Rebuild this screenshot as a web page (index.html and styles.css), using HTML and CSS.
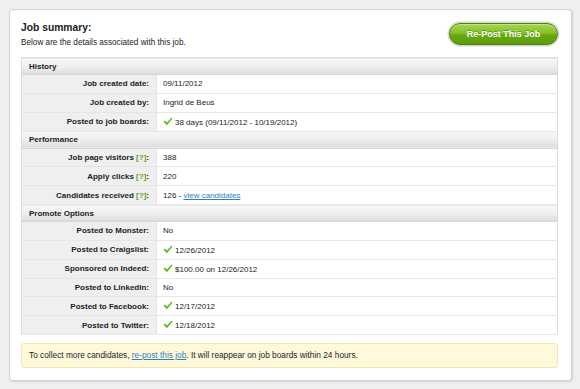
FILE: index.html
```html
<!DOCTYPE html>
<html>
<head>
<meta charset="utf-8">
<link rel="stylesheet" href="styles.css">
</head>
<body>
<div class="panel">
  <div class="top">
    <div class="intro">
      <h1 class="title">Job summary:</h1>
      <p class="sub">Below are the details associated with this job.</p>
    </div>
    <a class="btn">Re-Post This Job</a>
  </div>
  <table class="summary">
    <tr class="sec"><th colspan="2">History</th></tr>
    <tr><td class="lab">Job created date:</td><td class="val">09/11/2012</td></tr>
    <tr><td class="lab">Job created by:</td><td class="val">Ingrid de Beus</td></tr>
    <tr><td class="lab">Posted to job boards:</td><td class="val"><span class="chk"><svg width="10" height="9" viewBox="0 0 11 10"><path d="M0.5 5.2 L2.2 3.8 L4.2 6 L9.6 0.5 L10.6 1.6 L4.3 9.3 Z" fill="#5cbf1c"/></svg></span>38 days (09/11/2012 - 10/19/2012)</td></tr>
    <tr class="sec"><th colspan="2">Performance</th></tr>
    <tr><td class="lab">Job page visitors <span class="q">[?]</span>:</td><td class="val">388</td></tr>
    <tr><td class="lab">Apply clicks <span class="q">[?]</span>:</td><td class="val">220</td></tr>
    <tr><td class="lab">Candidates received <span class="q">[?]</span>:</td><td class="val">126 - <a class="lnk">view candidates</a></td></tr>
    <tr class="sec"><th colspan="2">Promote Options</th></tr>
    <tr><td class="lab">Posted to Monster:</td><td class="val">No</td></tr>
    <tr><td class="lab">Posted to Craigslist:</td><td class="val"><span class="chk"><svg width="10" height="9" viewBox="0 0 11 10"><path d="M0.5 5.2 L2.2 3.8 L4.2 6 L9.6 0.5 L10.6 1.6 L4.3 9.3 Z" fill="#5cbf1c"/></svg></span>12/26/2012</td></tr>
    <tr><td class="lab">Sponsored on Indeed:</td><td class="val"><span class="chk"><svg width="10" height="9" viewBox="0 0 11 10"><path d="M0.5 5.2 L2.2 3.8 L4.2 6 L9.6 0.5 L10.6 1.6 L4.3 9.3 Z" fill="#5cbf1c"/></svg></span>$100.00 on 12/26/2012</td></tr>
    <tr><td class="lab">Posted to LinkedIn:</td><td class="val">No</td></tr>
    <tr><td class="lab">Posted to Facebook:</td><td class="val"><span class="chk"><svg width="10" height="9" viewBox="0 0 11 10"><path d="M0.5 5.2 L2.2 3.8 L4.2 6 L9.6 0.5 L10.6 1.6 L4.3 9.3 Z" fill="#5cbf1c"/></svg></span>12/17/2012</td></tr>
    <tr><td class="lab">Posted to Twitter:</td><td class="val"><span class="chk"><svg width="10" height="9" viewBox="0 0 11 10"><path d="M0.5 5.2 L2.2 3.8 L4.2 6 L9.6 0.5 L10.6 1.6 L4.3 9.3 Z" fill="#5cbf1c"/></svg></span>12/18/2012</td></tr>
  </table>
  <div class="notice">To collect more candidates, <a class="lnk">re-post this job</a>. It will reappear on job boards within 24 hours.</div>
</div>
</body>
</html>
```
FILE: styles.css
```css
html, body {
  margin: 0;
  padding: 0;
}
body {
  background: #efefef;
  font-family: "Liberation Sans", Arial, Helvetica, sans-serif;
  color: #222;
  font-size: 8px;
  padding: 9px 7px 0 9px;
  height: 389px;
  box-sizing: border-box;
  overflow: hidden;
}
.panel {
  background: #fff;
  border: 1px solid #d2d2d2;
  border-radius: 4px;
  box-shadow: 1px 1px 2px rgba(0,0,0,0.12);
  padding: 11px 13px 12px 11px;
  width: 563px;
  box-sizing: border-box;
}
.top {
  display: flex;
  justify-content: space-between;
  align-items: flex-start;
}
.title {
  margin: 0;
  font-size: 10.3px;
  line-height: 14px;
  font-weight: bold;
  color: #1a1a1a;
}
.sub {
  margin: 2px 0 0;
  font-size: 8.2px;
  line-height: 11px;
  color: #222;
}
.btn {
  display: block;
  margin-top: 2px;
  width: 109px;
  height: 22px;
  box-sizing: border-box;
  border-radius: 11px;
  border: 1px solid #4a820c;
  background: linear-gradient(#a6d64e 0%, #84c226 45%, #69a810 55%, #5e9d0c 100%);
  box-shadow: 0 0 0 1.5px #d6d6d6, inset 0 1px 0 rgba(255,255,255,0.35);
  color: #fff;
  font-weight: bold;
  font-size: 9px;
  line-height: 20px;
  text-align: center;
  text-shadow: 0 -1px 0 rgba(0,0,0,0.25);
}
.summary {
  margin-top: 9px;
  width: 537px;
  border-collapse: collapse;
  border: 1px solid #dcdcdc;
}
.sec th {
  height: 16px;
  padding: 0 0 0 7px;
  text-align: left;
  font-weight: bold;
  font-size: 8px;
  color: #222;
  background: linear-gradient(#f8f8f8, #ececec 60%, #dcdcdc);
  border-bottom: 1px solid #d6d6d6;
}
td {
  height: 17.85px;
  padding: 0;
  border-bottom: 1px solid #e6e6e6;
  font-size: 8px;
}
.lab {
  width: 127px;
  background: #efefef;
  text-align: right;
  font-weight: bold;
  padding-right: 7px;
  border-right: 1px solid #e2e2e2;
  color: #222;
}
.val {
  padding-left: 6px;
  background: #fff;
}
.q {
  color: #5ea21a;
}
.chk {
  display: inline-block;
  width: 10px;
  height: 9px;
  margin-right: 2px;
  vertical-align: -1px;
}
.chk svg {
  display: block;
}
.lnk {
  color: #2c7fb8;
  text-decoration: underline;
}
.notice {
  margin-top: 8px;
  width: 537px;
  box-sizing: border-box;
  height: 25px;
  background: #fff9dc;
  border: 1px solid #f5e7a8;
  border-radius: 3px;
  padding: 0 7px;
  line-height: 23px;
  font-size: 8.3px;
  color: #222;
}
```
